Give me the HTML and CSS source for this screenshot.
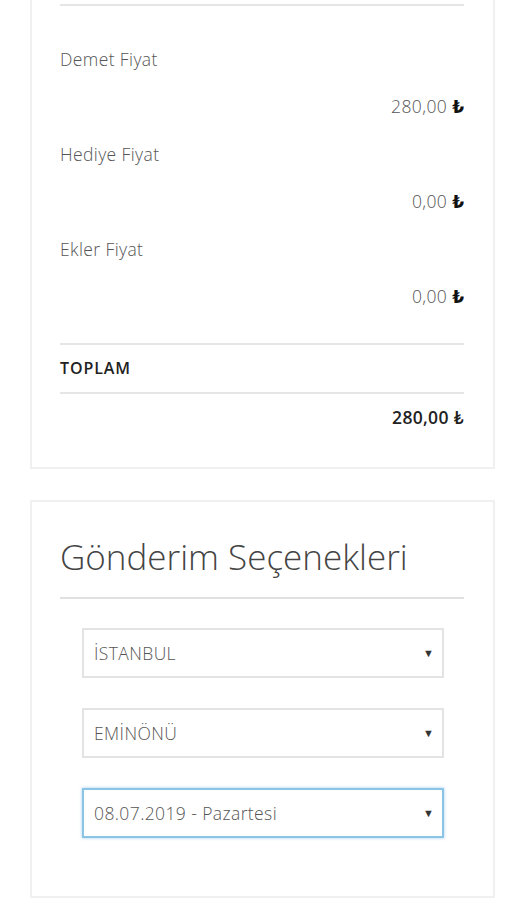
FILE: index.html
```html
<!DOCTYPE html>
<html lang="tr">
<head>
  <meta charset="UTF-8" />
  <meta name="viewport" content="width=device-width, initial-scale=1.0" />
  <title>Sipariş Özeti</title>
  <link rel="stylesheet" href="styles.css">
</head>
<body>

  <!-- Price Summary -->
  <section class="card summary">
    <div class="divider"></div>
    <ul class="price-list">
      <li>
        <span class="label">Demet Fiyat</span>
        <span class="amount">280,00 <b class="tl">₺</b></span>
      </li>
      <li>
        <span class="label">Hediye Fiyat</span>
        <span class="amount">0,00 <b class="tl">₺</b></span>
      </li>
      <li>
        <span class="label">Ekler Fiyat</span>
        <span class="amount">0,00 <b class="tl">₺</b></span>
      </li>
    </ul>
    <div class="total">
      <div class="total-label">TOPLAM</div>
      <div class="total-amount">280,00 ₺</div>
    </div>
  </section>

  <!-- Delivery Options -->
  <section class="card delivery">
    <h2>Gönderim Seçenekleri</h2>
    <div class="selects">
      <div class="select-box">
        <select>
          <option>İSTANBUL</option>
        </select>
        <span class="arrow">▼</span>
      </div>
      <div class="select-box">
        <select>
          <option>EMİNÖNÜ</option>
        </select>
        <span class="arrow">▼</span>
      </div>
      <div class="select-box focused">
        <select>
          <option>08.07.2019 - Pazartesi</option>
        </select>
        <span class="arrow">▼</span>
      </div>
    </div>
  </section>

</body>
</html>
```

FILE: styles.css
```css
body {
  font-family: "Open Sans", Lato, sans-serif;
  margin: 0;
  padding: 0;
  background: #ffffff;
  color: #555;
}

.card {
  margin: 0 0 0 30px;
  border: 2px solid #f0f0f0;
  background: #ffffff;
  box-sizing: content-box;
}

/* Price summary */
.summary {
  margin-top: -32px;
  padding: 34px 29px 26px 28px;
  width: 404px;
}

.divider {
  height: 2px;
  background: #e6e6e6;
}

.price-list {
  list-style: none;
  margin: 0;
  padding: 30px 0 0;
}

.price-list li {
  display: flex;
  flex-direction: column;
}

.label,
.amount {
  display: block;
  line-height: 47px;
  font-size: 17.5px;
  font-weight: 300;
  letter-spacing: 0.4px;
  color: #555;
}

.amount {
  text-align: right;
}

.tl {
  color: #111;
  font-family: "DejaVu Sans", sans-serif;
  font-weight: bold;
  font-size: 17px;
  letter-spacing: 0;
}

.total {
  margin-top: 22px;
  border-top: 2px solid #e6e6e6;
}

.total-label {
  line-height: 47px;
  font-size: 16px;
  font-weight: 600;
  color: #222;
  letter-spacing: 0.9px;
  border-bottom: 2px solid #e6e6e6;
}

.total-amount {
  line-height: 47px;
  font-size: 17.5px;
  font-weight: 600;
  letter-spacing: 0.3px;
  color: #222;
  text-align: right;
}

/* Delivery options */
.delivery {
  margin-top: 31px;
  padding: 35px 29px 58px 28px;
  width: 404px;
}

.delivery h2 {
  margin: 0;
  font-size: 35px;
  line-height: 40px;
  font-weight: 300;
  color: #444;
  padding-bottom: 20px;
  border-bottom: 2px solid #e0e0e0;
}

.selects {
  display: flex;
  flex-direction: column;
  gap: 30px;
  padding: 29px 20px 0 22px;
}

.select-box {
  position: relative;
  height: 50px;
  border: 2px solid #e3e3e3;
  box-sizing: border-box;
}

.select-box.focused {
  border-color: #8cc4e6;
  box-shadow: 0 0 3px rgba(102, 175, 233, 0.6);
}

.select-box select {
  appearance: none;
  -webkit-appearance: none;
  width: 100%;
  height: 100%;
  border: none;
  outline: none;
  background: transparent;
  padding: 0 10px;
  font-family: "Open Sans", Lato, sans-serif;
  font-size: 17.5px;
  font-weight: 300;
  letter-spacing: 0.4px;
  color: #555;
}

.arrow {
  position: absolute;
  right: 8px;
  top: 15px;
  font-size: 11px;
  color: #333;
  pointer-events: none;
}
```
